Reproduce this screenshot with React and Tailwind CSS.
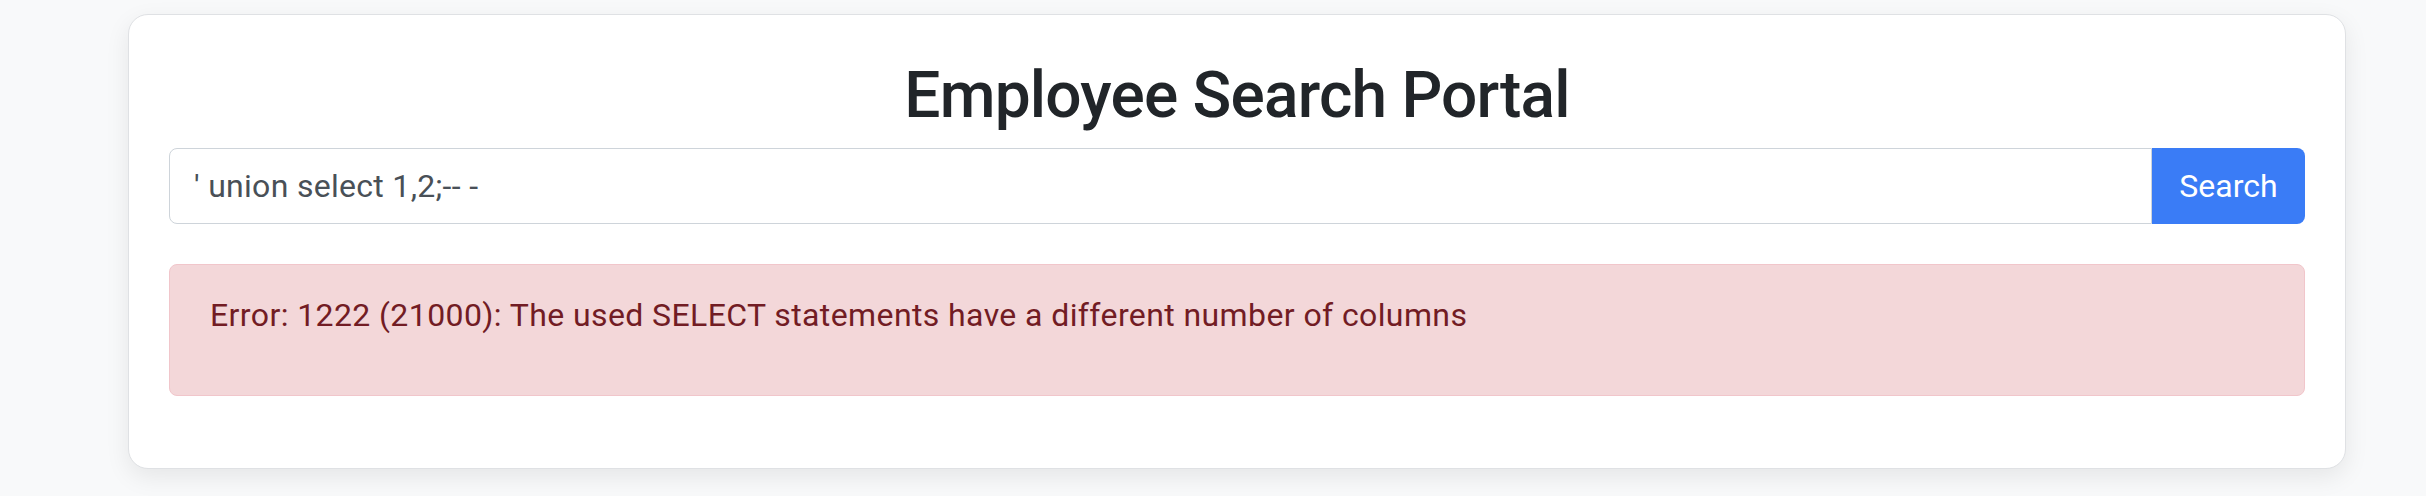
export default function App() {
  return (
    <div className="min-h-[496px] w-[2426px] bg-[#f8f9fa] pt-[14px] pb-[20px]" style={{ fontFamily: 'Roboto, "Liberation Sans", sans-serif' }}>
      <div className="ml-[128px] w-[2218px] rounded-[20px] border border-[#dfe1e4] bg-white p-[40px] shadow-[0_8px_24px_rgba(0,0,0,0.08)]">
        <h2 className="mb-[14px] pt-[2px] text-center text-[64px] font-medium leading-[77px] tracking-[-0.8px] text-[#212529]">
          Employee Search Portal
        </h2>
        <div className="flex h-[76px]">
          <input
            type="text"
            readOnly
            value="' union select 1,2;-- -"
            className="h-[76px] flex-1 rounded-l-[8px] border border-[#ced4da] bg-white px-[24px] text-[32px] tracking-[0.3px] text-[#495057] outline-none"
          />
          <button className="h-[76px] w-[153px] rounded-r-[8px] bg-[#3a7cf6] text-[32px] text-white">
            Search
          </button>
        </div>
        <div className="mt-[40px] mb-[32px] rounded-[8px] border border-[#f1c6cb] bg-[#f3d7d9] px-[40px] pt-[26px] pb-[56px] text-[32px] leading-[48px] tracking-[0.4px] text-[#721c24]">
          Error: 1222 (21000): The used SELECT statements have a different number of columns
        </div>
      </div>
    </div>
  );
}
